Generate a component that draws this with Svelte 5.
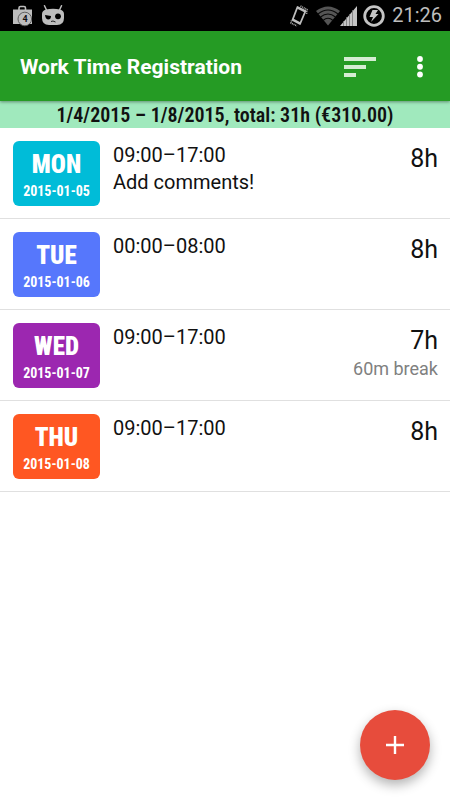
<script lang="ts">
  type Entry = {
    day: string;
    date: string;
    tone: string;
    time: string;
    comment?: string;
    hours: string;
    pause?: string;
  };

  const entries: Entry[] = [
    { day: 'MON', date: '2015-01-05', tone: 'cyan', time: '09:00–17:00', comment: 'Add comments!', hours: '8h' },
    { day: 'TUE', date: '2015-01-06', tone: 'blue', time: '00:00–08:00', hours: '8h' },
    { day: 'WED', date: '2015-01-07', tone: 'purple', time: '09:00–17:00', hours: '7h', pause: '60m break' },
    { day: 'THU', date: '2015-01-08', tone: 'orange', time: '09:00–17:00', hours: '8h' },
  ];
</script>

<div class="screen">
  <div class="status-bar">
    <svg width="20" height="22" viewBox="0 0 20 22" aria-hidden="true">
      <path d="M7 5V3Q7 1.500 8.500 1.500H12Q13.500 1.500 13.500 3V5" fill="none" stroke="#bdbdbd" stroke-width="1.600" />
      <path d="M1 4.500H20V19H1z" fill="#bdbdbd" />
      <circle cx="12.800" cy="14" r="6.800" fill="#bdbdbd" stroke="#555" stroke-width="0.900" />
      <text class="badge-count" x="13" y="17" text-anchor="middle">4</text>
    </svg>
    <svg class="cid" width="22" height="22" viewBox="0 0 22 22" aria-hidden="true">
      <path d="M2.500 0.800L4.500 5M19.500 0.800L17.500 5" stroke="#bdbdbd" stroke-width="1.500" stroke-linecap="round" />
      <path d="M4 4.500Q11 3 18 4.500Q22 5.500 22 9V13Q22 20 15 20H7Q0 20 0 13V9Q0 5.500 4 4.500z" fill="#bdbdbd" />
      <path d="M3 10L9 11Q9 14.500 6 14.500Q3.500 14 3 10z" fill="#000" />
      <circle cx="16" cy="11.300" r="2.900" fill="#000" />
      <path d="M9 16.500L11 16L13.500 17" fill="none" stroke="#222" />
    </svg>
    <div class="status-right">
      <svg width="18" height="22" viewBox="0 0 18 22" aria-hidden="true">
        <path d="M7.500 2L15.500 6L10 19L2.500 15z" fill="none" stroke="#bdbdbd" stroke-width="1.800" stroke-linejoin="round" />
        <path d="M7.500 2L15.500 6L14.800 7.500L6.800 3.500zM3.200 13.500L10.800 17.500L10 19L2.500 15z" fill="#bdbdbd" />
        <path d="M1.500 15.500L1 18L7 21M10.500 1L17 4.500L16.500 9" fill="none" stroke="#aaa" stroke-width="1.600" stroke-dasharray="1 0.800" />
      </svg>
      <svg class="wifi" width="24" height="20" viewBox="0 0 24 20" aria-hidden="true">
        <path d="M12 19.500L0 5Q12 -4 24 5z" fill="#555" />
        <path d="M2 8Q12 0 22 8M4.500 11Q12 5 19.500 11M7 14.500Q12 10 17 14.500" fill="none" stroke="#080808" stroke-width="1.100" />
      </svg>
      <svg width="17" height="20" viewBox="0 0 17 20" aria-hidden="true">
        <path d="M17 0V20H0z" fill="#c4c4c4" />
        <path d="M3.500 15V20M6.500 11V20M9.500 8V20M12.500 4V20" stroke="#777" stroke-width="0.800" />
      </svg>
      <svg class="charge" width="22" height="22" viewBox="0 0 22 22" aria-hidden="true">
        <circle cx="11" cy="11" r="9.300" fill="none" stroke="#c4c4c4" stroke-width="2.800" />
        <path d="M9.500 5H15L12.500 9H15.500L8 17L10 12H6.500z" fill="#c4c4c4" />
      </svg>
      <time class="clock">21:26</time>
    </div>
  </div>

  <header class="toolbar">
    <h1>Work Time Registration</h1>
    <button type="button" class="sort" aria-label="Sort">
      <svg width="32" height="20" viewBox="0 0 32 20">
        <path d="M0 0H32V4H0zM0 8H22V12H0zM0 16H12V20H0z" fill="#d5edd3" />
      </svg>
    </button>
    <button type="button" class="more" aria-label="More options">
      <svg width="6" height="22" viewBox="0 0 6 22">
        <circle cx="3" cy="3" r="2.900" fill="#fff" />
        <circle cx="3" cy="10.750" r="2.900" fill="#fff" />
        <circle cx="3" cy="18.500" r="2.900" fill="#fff" />
      </svg>
    </button>
  </header>

  <p class="summary">1/4/2015 – 1/8/2015, total: 31h (€310.00)</p>

  <ul class="entries">
    {#each entries as entry}
      <li class="entry">
        <div class="day {entry.tone}">
          <strong>{entry.day}</strong>
          <span>{entry.date}</span>
        </div>
        <div class="details">
          <div>{entry.time}</div>
          {#if entry.comment}
            <div>{entry.comment}</div>
          {/if}
        </div>
        <div class="totals">
          <div class="hours">{entry.hours}</div>
          {#if entry.pause}
            <div class="pause">{entry.pause}</div>
          {/if}
        </div>
      </li>
    {/each}
  </ul>

  <button type="button" class="fab" aria-label="Add entry">
    <svg width="18" height="18" viewBox="0 0 18 18">
      <path d="M9 0V18M0 9H18" stroke="#fff" stroke-width="2.400" />
    </svg>
  </button>
</div>

<style>
  :global(body) {
    margin: 0;
    background: #fff;
  }

  .screen {
    min-height: 100vh;
    font-family: Roboto, sans-serif;
    color: #111;
  }

  button {
    display: flex;
    align-items: center;
    justify-content: center;
    padding: 0;
    border: none;
    background: none;
    cursor: pointer;
  }

  .status-bar {
    display: flex;
    align-items: center;
    height: 31px;
    padding: 0 8px 0 12px;
    background: #000;
  }

  .badge-count {
    font-size: 9px;
    font-weight: 700;
    fill: #111;
  }

  .cid {
    margin-left: 10px;
  }

  .status-right {
    display: flex;
    align-items: center;
    margin-left: auto;
  }

  .wifi {
    margin-left: 8px;
  }

  .charge {
    margin: 0 7px 0 6px;
  }

  .clock {
    font-size: 20px;
    line-height: 31px;
    color: #bdbdbd;
  }

  .toolbar {
    position: relative;
    display: flex;
    align-items: center;
    box-sizing: border-box;
    height: 70px;
    padding: 1px 20px 0;
    background: #259b24;
    box-shadow: 0 1px 3px rgba(0, 0, 0, 0.4);
  }

  h1 {
    flex: 1;
    margin: 0;
    font-size: 21px;
    line-height: 30px;
    font-weight: 700;
    color: #fff;
    white-space: nowrap;
  }

  .sort {
    width: 60px;
    height: 48px;
  }

  .more {
    width: 20px;
    height: 48px;
    margin-left: 20px;
  }

  .summary {
    margin: 0;
    padding-top: 2px;
    font-family: 'Roboto Condensed', Roboto, sans-serif;
    font-size: 20px;
    line-height: 25px;
    font-weight: 600;
    text-align: center;
    background: #a0e9bd;
  }

  .entries {
    margin: 0;
    padding: 0;
    list-style: none;
  }

  .entry {
    display: flex;
    align-items: flex-start;
    padding: 13px 12px 12px 13px;
    border-bottom: 1px solid #e0e0e0;
  }

  .day {
    display: flex;
    flex-direction: column;
    align-items: center;
    box-sizing: border-box;
    width: 87px;
    height: 65px;
    padding-top: 8px;
    border-radius: 6px;
    font-family: 'Roboto Condensed', Roboto, sans-serif;
    font-weight: 700;
    color: #fff;
  }

  .day strong {
    font-size: 25px;
    line-height: 32px;
  }

  .day span {
    font-size: 14px;
    line-height: 20px;
  }

  .cyan {
    background: #00bcd8;
  }

  .blue {
    background: #5677fc;
  }

  .purple {
    background: #9c27b0;
  }

  .orange {
    background: #ff5722;
  }

  .details {
    flex: 1;
    padding: 1px 0 0 13px;
    font-size: 20px;
    line-height: 27px;
  }

  .totals {
    text-align: right;
  }

  .hours {
    font-size: 25px;
    line-height: 36px;
  }

  .pause {
    font-size: 18px;
    line-height: 20px;
    color: #808080;
  }

  .fab {
    position: fixed;
    right: 20px;
    bottom: 20px;
    width: 70px;
    height: 70px;
    border-radius: 50%;
    background: #e74c3c;
    box-shadow: 0 5px 12px rgba(0, 0, 0, 0.3);
  }
</style>
